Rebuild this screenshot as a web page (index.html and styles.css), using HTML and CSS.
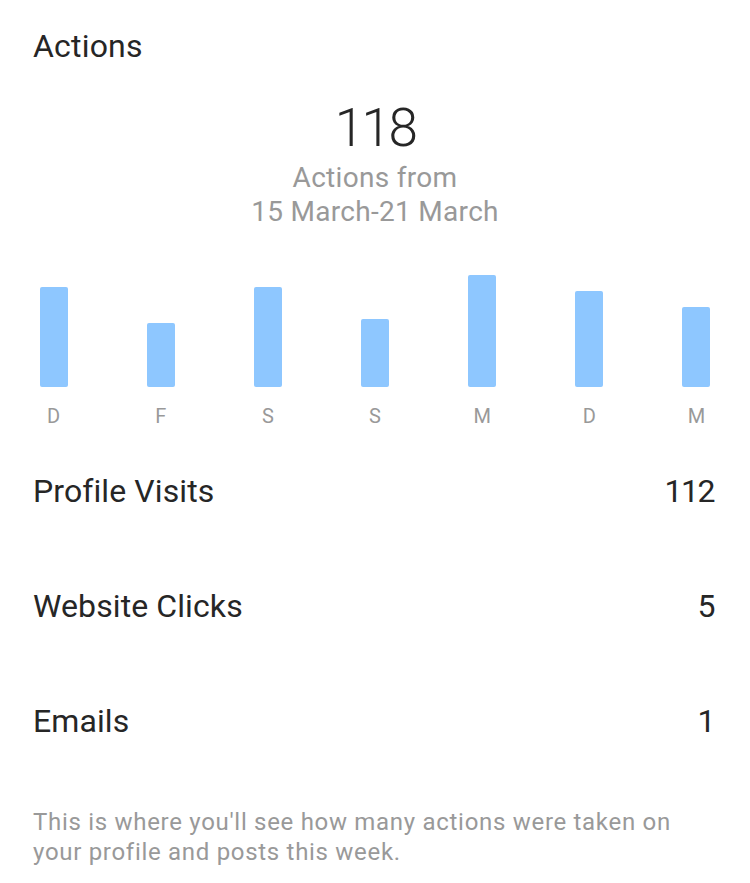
FILE: index.html
```html
<!DOCTYPE html>
<html lang="en">
<head>
    <meta charset="UTF-8">
    <meta name="viewport" content="width=device-width, initial-scale=1.0">
    <title>Actions</title>
    <link rel="stylesheet" href="styles.css">
</head>
<body>
    <div class="insights">
        <h2 class="section-title">Actions</h2>

        <!-- Weekly total -->
        <div class="summary">
            <div class="summary-total">118</div>
            <div class="summary-caption">Actions from</div>
            <div class="summary-caption">15 March-21 March</div>
        </div>

        <!-- Bar per day -->
        <div class="chart">
            <div class="day"><div class="bar-track"><div class="bar" style="height: 100px;"></div></div><span class="day-label">D</span></div>
            <div class="day"><div class="bar-track"><div class="bar" style="height: 64px;"></div></div><span class="day-label">F</span></div>
            <div class="day"><div class="bar-track"><div class="bar" style="height: 100px;"></div></div><span class="day-label">S</span></div>
            <div class="day"><div class="bar-track"><div class="bar" style="height: 68px;"></div></div><span class="day-label">S</span></div>
            <div class="day"><div class="bar-track"><div class="bar" style="height: 112px;"></div></div><span class="day-label">M</span></div>
            <div class="day"><div class="bar-track"><div class="bar" style="height: 96px;"></div></div><span class="day-label">D</span></div>
            <div class="day"><div class="bar-track"><div class="bar" style="height: 80px;"></div></div><span class="day-label">M</span></div>
        </div>

        <div class="stats">
            <div class="stat-row">
                <span class="stat-name">Profile Visits</span>
                <span class="stat-value">112</span>
            </div>
            <div class="stat-row">
                <span class="stat-name">Website Clicks</span>
                <span class="stat-value">5</span>
            </div>
            <div class="stat-row">
                <span class="stat-name">Emails</span>
                <span class="stat-value">1</span>
            </div>
        </div>

        <p class="note">This is where you'll see how many actions were taken on your profile and posts this week.</p>
    </div>
</body>
</html>
```

FILE: styles.css
```css
body {
    margin: 0;
    background: #fff;
    color: #262626;
    font-family: Roboto, "Liberation Sans", Arial, sans-serif;
}

.insights {
    width: 750px;
}

.section-title {
    margin: 0;
    padding: 28px 34px 0 33px;
    font-size: 32px;
    font-weight: 400;
    line-height: 36px;
    letter-spacing: 0.2px;
}

/* Weekly total */
.summary {
    margin-top: 34px;
    text-align: center;
}

.summary-total {
    font-size: 53px;
    font-weight: 300;
    line-height: 60px;
    letter-spacing: -2.5px;
}

.summary-caption {
    color: #999;
    font-size: 28px;
    line-height: 34px;
    letter-spacing: 0.3px;
}

.summary-total + .summary-caption {
    margin-top: 3px;
}

/* Bar chart */
.chart {
    display: grid;
    grid-template-columns: repeat(7, 1fr);
    margin-top: 38px;
}

.day {
    display: flex;
    flex-direction: column;
    align-items: center;
}

.bar-track {
    height: 120px;
    display: flex;
    align-items: flex-end;
}

.bar {
    width: 28px;
    background: #8ec7ff;
    border-radius: 2px;
}

.day-label {
    margin-top: 17px;
    color: #999;
    font-size: 20px;
    line-height: 24px;
}

/* Totals per action */
.stats {
    margin-top: 5px;
}

.stat-row {
    height: 115px;
    padding: 0 34px 0 33px;
    display: flex;
    justify-content: space-between;
    align-items: center;
    font-size: 32px;
    line-height: 36px;
    letter-spacing: 0.1px;
}

.stat-value {
    padding-right: 2px;
    letter-spacing: -1.5px;
}

.note {
    margin: 29px 0 0;
    padding: 0 34px 0 33px;
    color: #999;
    font-size: 24px;
    line-height: 30px;
    letter-spacing: 0.7px;
}
```
